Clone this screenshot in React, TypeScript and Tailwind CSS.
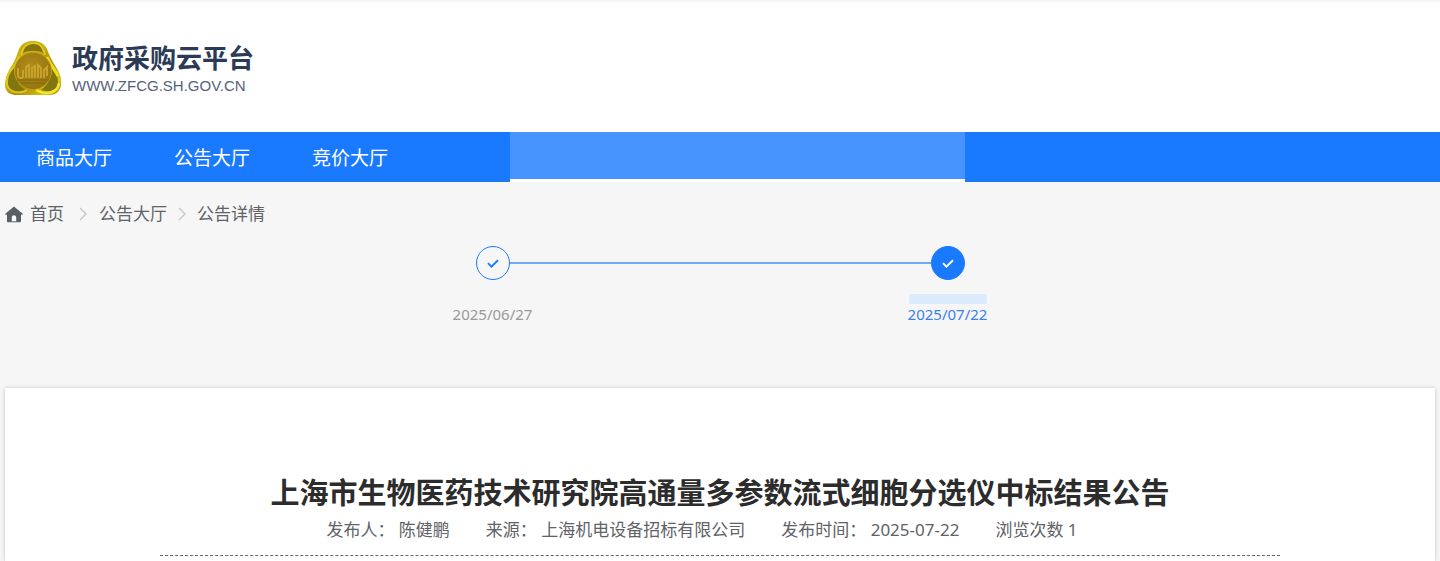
import clsx from "clsx";

const navItems = ["商品大厅", "公告大厅", "竞价大厅"];

const steps = [
  { date: "2025/06/27", active: false },
  { date: "2025/07/22", active: true },
];

const meta = [
  { label: "发布人：", value: "陈健鹏" },
  { label: "来源：", value: "上海机电设备招标有限公司" },
  { label: "发布时间：", value: "2025-07-22" },
  { label: "浏览次数", value: "1" },
];

function Emblem() {
  return (
    <svg viewBox="0 0 56 56" className="h-14 w-14 shrink-0" aria-hidden="true">
      <defs>
        <linearGradient id="rim" x1="0" y1="0" x2="1" y2="1">
          <stop offset="0" stopColor="#c7a70c" />
          <stop offset="0.4" stopColor="#cdb012" />
          <stop offset="0.6" stopColor="#b08a08" />
          <stop offset="0.85" stopColor="#d8c81a" />
          <stop offset="1" stopColor="#8f6a05" />
        </linearGradient>
        <radialGradient id="disc" cx="0.45" cy="0.4" r="0.65">
          <stop offset="0" stopColor="#b08d1a" />
          <stop offset="1" stopColor="#957410" />
        </radialGradient>
      </defs>
      <path
        d="M28 1C34 1 39 3 42 9C44 15 47 21 51 27C55 33 57 39 56 45C55 52 50 55 44 55H12C6 55 1 53 0 46C0 39 2 33 6 27C10 21 12 15 14 9C17 3 22 1 28 1Z"
        fill="url(#rim)"
      />
      <path d="M28 4C34 4 37 7 38 13C33 10 23 10 18 13C19 7 22 4 28 4Z" fill="#87740c" />
      <path d="M3 43C3 37 5 32 9 28C9 37 13 45 20 50L11 52C6 51 3 48 3 43Z" fill="#81750f" />
      <path d="M53 43C53 37 51 32 47 28C47 37 43 45 36 50L45 52C50 51 53 48 53 43Z" fill="#81750f" />
      <path d="M16 15C18 7 22 3 28 3C35 3 38 7 40 15" fill="none" stroke="#e3cd1d" strokeWidth="1.5" />
      <path
        d="M14 16C12 23 7 28 3 35C0 43 2 50 10 52C15 53 19 52 22 50"
        fill="none"
        stroke="#dcc81c"
        strokeWidth="2"
      />
      <path d="M42 17C45 24 50 30 53 36" fill="none" stroke="#ecdc22" strokeWidth="3" />
      <path d="M54 43C53 51 48 53 41 53C37 53 34 51 31 50" fill="none" stroke="#f1e62a" strokeWidth="2.5" />
      <circle cx="28" cy="31" r="18.5" fill="url(#disc)" stroke="#bfa01c" strokeWidth="0.8" />
      <path
        d="M13 28V36C14 39 18 39 18 36V30M21 38V27L24 25V38M27 38V28L30 26V38M33 38V25L36 28V38M39 38V30L42 27V36"
        fill="none"
        stroke="#cba62e"
        strokeWidth="1.8"
      />
      <path d="M12 40H44M16 43H40" stroke="#85660a" strokeWidth="1" />
    </svg>
  );
}

function HomeIcon() {
  return (
    <svg viewBox="0 0 18 17" className="h-[17px] w-[18px]" aria-hidden="true">
      <path
        d="M9 .5L17.4 7.4C18 8 17.8 8.8 17 8.8H16V15C16 15.8 15.6 16.3 14.8 16.3H11.2V11.5C11.2 10 10.3 9.2 9 9.2S6.8 10 6.8 11.5V16.3H3.2C2.4 16.3 2 15.8 2 15V8.8H1C.2 8.8 0 8 .6 7.4Z"
        fill="#5c5f66"
      />
      <path d="M7.8 16.3V12C7.8 11 8.2 10.5 9 10.5S10.2 11 10.2 12V16.3Z" fill="#ffffff" />
      <path d="M6.8 15.3H11.2V16.3H6.8Z" fill="#5c5f66" />
    </svg>
  );
}

function Chevron() {
  return (
    <svg viewBox="0 0 8 14" className="h-[14px] w-2" fill="none" stroke="#c3c5ca" strokeWidth="1.3" aria-hidden="true">
      <path d="M1 1L7 7L1 13" />
    </svg>
  );
}

function CheckIcon() {
  return (
    <svg viewBox="0 0 12 12" className="h-3 w-3" fill="none" stroke="currentColor" strokeWidth="1.9" aria-hidden="true">
      <path d="M1 6.2L4.4 9.6L11 3.2" />
    </svg>
  );
}

export default function App() {
  return (
    <div className="flex min-h-screen flex-col bg-[#f6f6f6] font-['Noto_Sans','Noto_Sans_CJK_SC',sans-serif] text-[17px] text-[#606266]">
      <header className="mt-0.5 bg-white px-[5px] pt-[38px] pb-9">
        <a href="#" className="flex w-fit items-center gap-[11px]">
          <Emblem />
          <span className="flex flex-col text-[#2b3a55]">
            <span className="text-[26px] leading-9 font-bold">政府采购云平台</span>
            <span className="font-['Liberation_Sans',sans-serif] text-[15px] leading-5 text-[#56627a]">
              WWW.ZFCG.SH.GOV.CN
            </span>
          </span>
        </a>
      </header>

      <nav className="flex h-[50px] bg-[#1a7aff] text-white">
        <div className="flex w-[35.4%] items-center gap-[62px] pt-0.5 pl-9">
          {navItems.map((item) => (
            <a key={item} href="#" className="text-[19px] whitespace-nowrap">
              {item}
            </a>
          ))}
        </div>
        <div className="w-[31.6%] border-b-[3px] border-white bg-[#4793ff]" />
      </nav>

      <nav className="flex items-center px-[5px] pt-5 leading-6">
        <a href="#" className="flex items-center gap-[7px]">
          <HomeIcon />
          首页
        </a>
        <span className="pr-3 pl-[15px]">
          <Chevron />
        </span>
        <a href="#">公告大厅</a>
        <span className="px-[11px]">
          <Chevron />
        </span>
        <span>公告详情</span>
      </nav>

      <ol className="mx-auto flex w-[910px] max-w-full pt-5">
        {steps.map((step, i) => (
          <li key={step.date} className="flex flex-1 flex-col items-center">
            <div className="flex w-full items-center">
              <span className={clsx("h-0.5 flex-1", i > 0 && "bg-[#70a9f8]")} />
              <span
                className={clsx(
                  "flex h-[34px] w-[34px] items-center justify-center rounded-full border border-[#1a7aff]",
                  step.active ? "bg-[#1a7aff] text-white" : "text-[#1a7aff]"
                )}
              >
                <CheckIcon />
              </span>
              <span className={clsx("h-0.5 flex-1", i < steps.length - 1 && "bg-[#70a9f8]")} />
            </div>
            <span className={clsx("mt-[14px] h-[10px] w-[78px] rounded-xs", step.active && "bg-[#dceafd]")} />
            <time className={clsx("text-[15px] leading-5", step.active ? "text-[#3a80f2]" : "text-[#999999]")}>
              {step.date}
            </time>
          </li>
        ))}
      </ol>

      <main className="mx-[5px] mt-16 flex-1 bg-white px-[155px] pt-[85px] shadow-[0_0_4px_rgba(0,0,0,0.2)]">
        <h1 className="text-center text-[29px] leading-10 font-bold whitespace-nowrap text-[#2c2c2c]">
          上海市生物医药技术研究院高通量多参数流式细胞分选仪中标结果公告
        </h1>
        <div className="flex justify-center border-b border-dashed border-[#666666] pt-[5px] pb-[13px] leading-6 whitespace-nowrap">
          {meta.map((item) => (
            <span key={item.label} className="mr-9">
              {item.label} {item.value}
            </span>
          ))}
        </div>
      </main>
    </div>
  );
}
